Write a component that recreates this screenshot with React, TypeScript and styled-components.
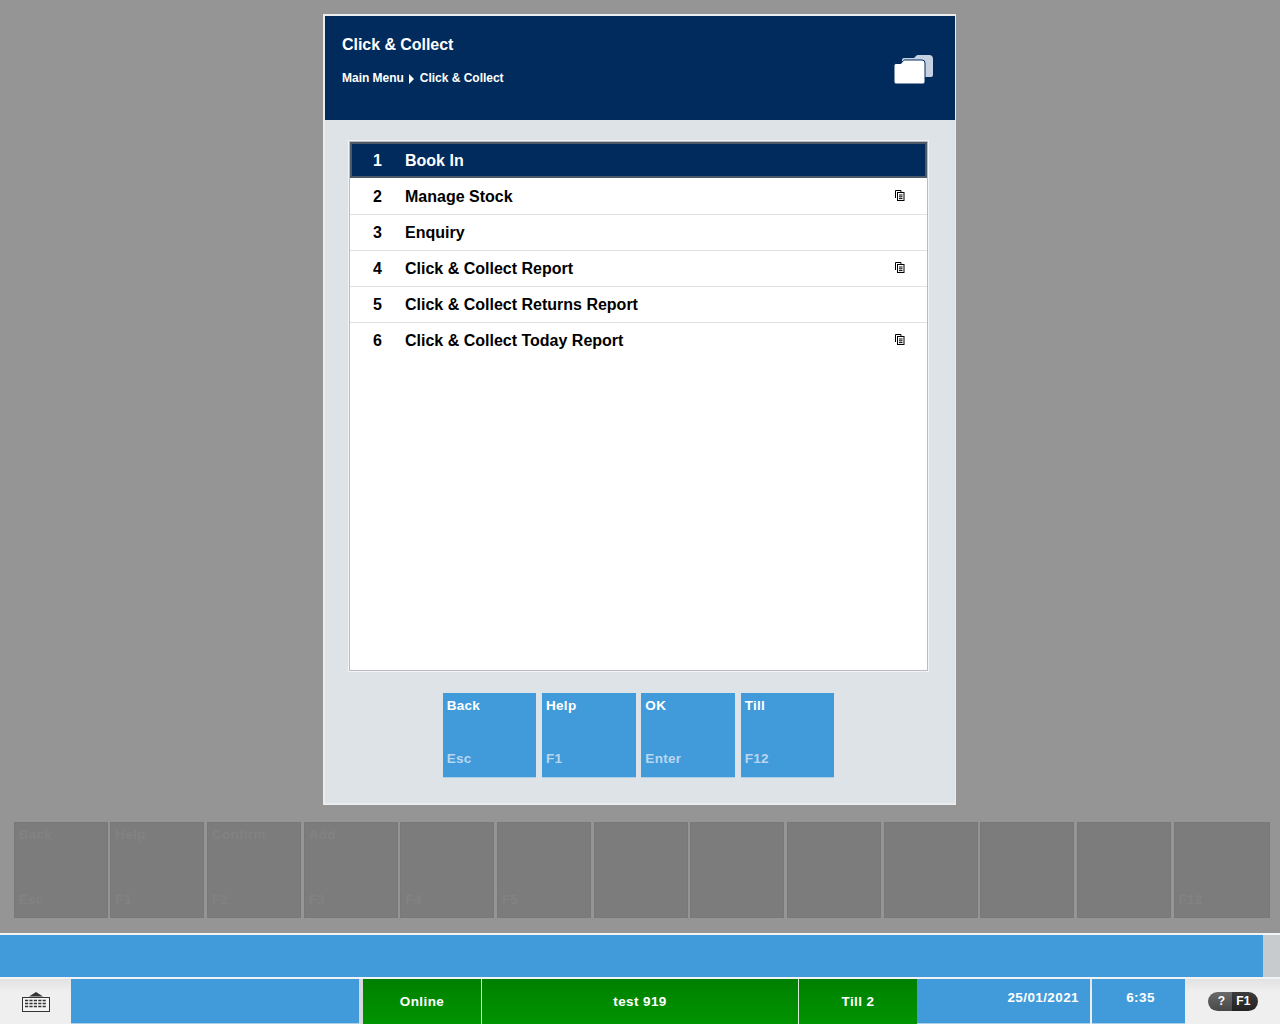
import React from "react";
import styled, { createGlobalStyle } from "styled-components";

const Global = createGlobalStyle`
  html, body { margin: 0; padding: 0; height: 100%; background: #959595; }
  * { box-sizing: border-box; }
  body { font-family: "Liberation Sans", Arial, sans-serif; font-weight: 700; overflow: hidden; }
`;

const Page = styled.div`
  width: 1280px;
  height: 1024px;
  display: flex;
  flex-direction: column;
  background: #959595;
`;

const Stage = styled.main`
  height: 822px;
  padding-top: 14px;
  padding-left: 323px;
`;

const Modal = styled.section`
  width: 633px;
  height: 791px;
  display: flex;
  flex-direction: column;
  background: #dde3e7;
  border: 2px solid #e9edf0;
  border-right-width: 1px;
`;

const Header = styled.header`
  height: 104px;
  flex: none;
  background: #002b5c;
  color: #fff;
  padding: 20px 21px 0 17px;
  display: flex;
  justify-content: space-between;
`;

const HeaderText = styled.div`
  display: flex;
  flex-direction: column;
`;

const Title = styled.h1`
  margin: 0;
  font-size: 16px;
  line-height: 18px;
  font-weight: 700;
  letter-spacing: -0.05px;
`;

const Crumbs = styled.div`
  margin-top: 16px;
  display: flex;
  align-items: center;
  font-size: 12px;
  line-height: 16px;
  letter-spacing: -0.02px;
`;

const CrumbArrow = styled.span`
  width: 0;
  height: 0;
  margin: 1px 6px 0 5px;
  border-left: 5px solid #fff;
  border-top: 5px solid transparent;
  border-bottom: 5px solid transparent;
`;

const FolderIcon = styled.svg`
  width: 40px;
  height: 29px;
  margin-top: 19px;
  flex: none;
`;

const Content = styled.div`
  flex: 1;
  display: flex;
  flex-direction: column;
  padding: 21px 26px 0 24px;
`;

const MenuBox = styled.ol`
  list-style: none;
  margin: 0;
  padding: 0;
  width: 579px;
  height: 530px;
  background: #fff;
  border: 1px solid #b9bdc1;
  outline: 1px solid #f2f4f6;
`;

const Row = styled.li<{ $selected?: boolean }>`
  height: 36px;
  display: flex;
  align-items: center;
  font-size: 16px;
  color: ${(p) => (p.$selected ? "#fff" : "#000")};
  background: ${(p) => (p.$selected ? "#002b5c" : "#fff")};
  border: ${(p) => (p.$selected ? "2px solid #4c5a68" : "0")};
  border-bottom: ${(p) => (p.$selected ? "2px solid #4c5a68" : "1px solid #dfe1e3")};
  padding-left: ${(p) => (p.$selected ? "21px" : "23px")};
  padding-right: 22px;
  &:nth-child(1) { padding-top: 1px; }
  &:nth-child(2) { height: 37px; padding-top: 1px; }
  &:last-child { border-bottom-color: transparent; }
`;

const Num = styled.span`
  width: 32px;
  flex: none;
`;

const Label = styled.span`
  flex: 1;
`;

const DocIcon = styled.svg`
  width: 10px;
  height: 11px;
  flex: none;
  margin-top: -2px;
`;

const Actions = styled.div`
  margin-top: 22px;
  display: flex;
  justify-content: center;
  gap: 5.67px;
  padding-right: 1px;
`;

const ActionButton = styled.button`
  width: 93.67px;
  height: 85px;
  padding: 5px 4px 10px;
  border: 0;
  border-bottom: 1px solid #a9cfe9;
  background: #419bdb;
  color: #fff;
  font: inherit;
  display: flex;
  flex-direction: column;
  justify-content: space-between;
  align-items: flex-start;
  text-align: left;
  font-size: 13.5px;
  line-height: 16px;
  letter-spacing: 0.3px;
`;

const KeyHint = styled.span`
  color: #b9d6ee;
`;

const FKeys = styled.div`
  height: 96px;
  flex: none;
  margin: 0 10px 0 13.7px;
  display: grid;
  grid-template-columns: repeat(12, 94px) 1fr;
  gap: 2.67px;
`;

const FKey = styled.div`
  background: #7c7c7c;
  border: 1px solid #787878;
  color: #828282;
  padding: 4px 4px 9px;
  display: flex;
  flex-direction: column;
  justify-content: space-between;
  font-size: 13.5px;
  line-height: 16px;
  letter-spacing: 0.3px;
`;

const MessageBar = styled.div`
  margin-top: 15px;
  height: 46px;
  flex: none;
  display: flex;
  border-top: 2px solid #f1f3f4;
  border-bottom: 2px solid #f1f3f4;
  background: #c8cbce;
`;

const MessageFill = styled.div`
  width: 1263px;
  background: #419bdb;
`;

const Status = styled.footer`
  flex: 1;
  display: flex;
  align-items: stretch;
  font-size: 13.5px;
  letter-spacing: 0.4px;
  color: #fff;
  background: linear-gradient(#e2e2e2, #efefef 30%);
`;

const KeyboardCell = styled.div`
  width: 71px;
  display: flex;
  align-items: center;
  justify-content: center;
`;

const KeyboardIcon = styled.svg`
  width: 28px;
  height: 20px;
`;

const BlueCell = styled.div<{ $w: number; $line?: boolean }>`
  width: ${(p) => p.$w}px;
  background: #419bdb;
  border-bottom: 1px solid #a9cfe9;
  margin-right: ${(p) => (p.$line ? "2px" : "0")};
`;

const Gap = styled.div`
  width: 4px;
  background: #d6d8d9;
`;

const GreenCell = styled.div<{ $w: number; $line?: boolean }>`
  width: ${(p) => p.$w}px;
  background: linear-gradient(#008000, #009400);
  display: flex;
  align-items: center;
  justify-content: center;
  border-right: ${(p) => (p.$line ? "1px solid #d9ecd9" : "0")};
`;

const DateCell = styled(BlueCell)`
  display: flex;
  justify-content: flex-end;
  padding: 11px 11px 0 0;
  line-height: 16px;
`;

const TimeCell = styled(BlueCell)`
  display: flex;
  justify-content: center;
  padding: 11px 0 0 4px;
  line-height: 16px;
`;

const HelpCell = styled.div`
  flex: 1;
  display: flex;
  align-items: center;
  padding-left: 23px;
`;

const HelpPill = styled.div`
  display: flex;
  width: 50px;
  height: 19px;
  border-radius: 10px;
  overflow: hidden;
  font-size: 12px;
  line-height: 19px;
  text-align: center;
  letter-spacing: 0.2px;
`;

const PillQ = styled.span`
  width: 24px;
  padding-left: 3px;
  background: linear-gradient(#6a6a6a, #484848);
`;

const PillKey = styled.span`
  flex: 1;
  padding-right: 3px;
  background: linear-gradient(#3c3c3c, #222);
`;

const menu = [
  { n: 1, t: "Book In", doc: false },
  { n: 2, t: "Manage Stock", doc: true },
  { n: 3, t: "Enquiry", doc: false },
  { n: 4, t: "Click & Collect Report", doc: true },
  { n: 5, t: "Click & Collect Returns Report", doc: false },
  { n: 6, t: "Click & Collect Today Report", doc: true },
];

const actions = [
  ["Back", "Esc"],
  ["Help", "F1"],
  ["OK", "Enter"],
  ["Till", "F12"],
];

const fkeys = [
  ["Back", "Esc"], ["Help", "F1"], ["Confirm", "F2"], ["Add", "F3"], ["", "F4"], ["", "F5"],
  ["", ""], ["", ""], ["", ""], ["", ""], ["", ""], ["", ""], ["", "F12"],
];

const Doc = () => (
  <DocIcon viewBox="0 0 10 11">
    <path d="M.5 8V.5H6V2.5" fill="none" stroke="#000" />
    <rect x="2.5" y="2.5" width="6.5" height="8" fill="#fff" stroke="#000" />
    <path d="M4 5h3.5M4 6.8h3.5M4 8.6h3.5" stroke="#000" />
  </DocIcon>
);

const keyRows = [8.5, 11.5, 14.5];

export default function App() {
  return (
    <Page>
      <Global />
      <Stage>
        <Modal>
          <Header>
            <HeaderText>
              <Title>Click &amp; Collect</Title>
              <Crumbs>
                Main Menu<CrumbArrow />Click &amp; Collect
              </Crumbs>
            </HeaderText>
            <FolderIcon viewBox="0 0 40 29">
              <path d="M8 22V5a2 2 0 0 1 2-2h10l2-2a3 3 0 0 1 2-1h11a4 4 0 0 1 4 4v16a2 2 0 0 1-2 2z" fill="#c5d1e2" />
              <path d="M0 10.5a2 2 0 0 1 2-2h5l2.5-3a2 2 0 0 1 1.5-.5h17a3 3 0 0 1 3 3v19a2 2 0 0 1-2 2H2a2 2 0 0 1-2-2z" fill="#fff" stroke="#002b5c" strokeWidth="1" />
            </FolderIcon>
          </Header>
          <Content>
            <MenuBox>
              {menu.map((m, i) => (
                <Row key={m.n} $selected={i === 0}>
                  <Num>{m.n}</Num>
                  <Label>{m.t}</Label>
                  {m.doc && <Doc />}
                </Row>
              ))}
            </MenuBox>
            <Actions>
              {actions.map(([a, k]) => (
                <ActionButton key={a}>
                  <span>{a}</span>
                  <KeyHint>{k}</KeyHint>
                </ActionButton>
              ))}
            </Actions>
          </Content>
        </Modal>
      </Stage>
      <FKeys>
        {fkeys.map(([a, k], i) => (
          <FKey key={i}>
            <span>{a}</span>
            <span>{k}</span>
          </FKey>
        ))}
      </FKeys>
      <MessageBar>
        <MessageFill />
      </MessageBar>
      <Status>
        <KeyboardCell>
          <KeyboardIcon viewBox="0 0 28 20">
            <path d="M14 0l7 4.5H7z" fill="#333" />
            <rect x=".5" y="5.5" width="27" height="14" fill="#f4f4f4" stroke="#333" />
            {keyRows.map((y) => (
              <path key={y} d={`M3 ${y}h22`} stroke="#333" strokeWidth="1.7" strokeDasharray="3.2 1.2" />
            ))}
          </KeyboardIcon>
        </KeyboardCell>
        <BlueCell $w={288} />
        <Gap />
        <GreenCell $w={119} $line>Online</GreenCell>
        <GreenCell $w={317} $line>test 919</GreenCell>
        <GreenCell $w={118}>Till 2</GreenCell>
        <DateCell $w={173} $line>25/01/2021</DateCell>
        <TimeCell $w={93}>6:35</TimeCell>
        <HelpCell>
          <HelpPill>
            <PillQ>?</PillQ>
            <PillKey>F1</PillKey>
          </HelpPill>
        </HelpCell>
      </Status>
    </Page>
  );
}
